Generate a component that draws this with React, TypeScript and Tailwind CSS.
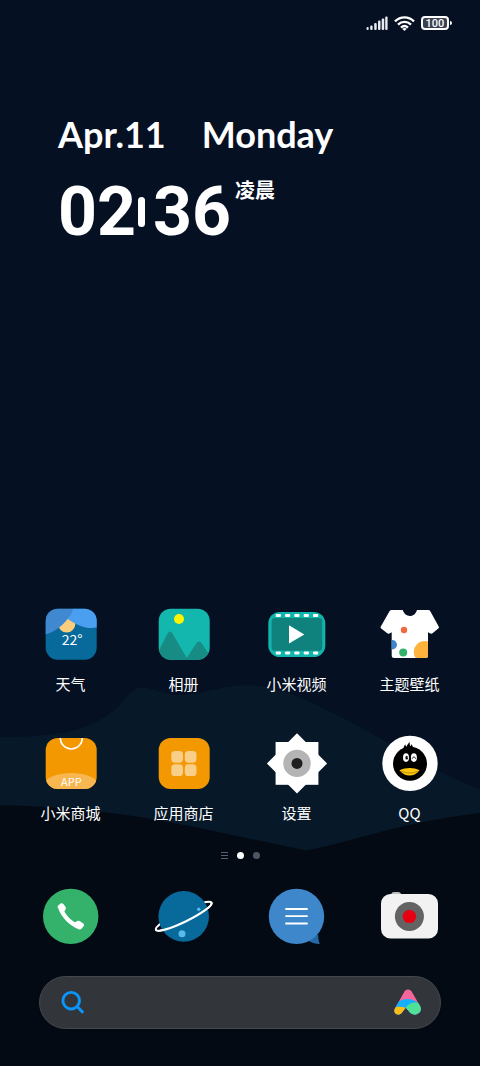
import React, { useState } from 'react'

interface AppItem {
  name: string
  icon: React.ReactNode
}

function Icon({ children }: { children: React.ReactNode }) {
  return (
    <svg viewBox="0 0 60 60" className="h-15 w-15 overflow-visible" aria-hidden="true">
      {children}
    </svg>
  )
}

const WeatherIcon = () => (
  <Icon>
    <defs>
      <clipPath id="weather-clip">
        <rect x="4.7" y="4.7" width="51" height="51" rx="12" />
      </clipPath>
    </defs>
    <g clipPath="url(#weather-clip)">
      <rect x="4" y="4" width="52" height="52" fill="#076a9b" />
      <circle cx="25.7" cy="20" r="8.6" fill="#fbcd7c" />
      <path d="M4 4H32C31.5 9 29.5 13 26.3 15.5C20 23 13 28 4 30.6Z" fill="#4088cf" />
      <path d="M31.8 4H56V23.6C50 24.6 44.5 24 39 21.7C34.5 20 30 17.6 26.3 14.6C29.5 12 31.4 8.5 31.8 4Z" fill="#4a9ff0" />
    </g>
    <text x="31" y="41" textAnchor="middle" fontSize="14" fill="#fff" className="font-['Noto_Sans_CJK_SC',sans-serif]">
      22°
    </text>
  </Icon>
)

const GalleryIcon = () => (
  <Icon>
    <defs>
      <clipPath id="gallery-clip">
        <rect x="4.7" y="4.7" width="51" height="51" rx="12" />
      </clipPath>
    </defs>
    <g clipPath="url(#gallery-clip)">
      <rect x="4" y="4" width="52" height="52" fill="#14b7ae" />
      <circle cx="25" cy="15" r="5" fill="#fdf500" />
      <path d="M4 48.3L13.6 29.2Q16 25.6 18.4 29.2L32.7 54L42.6 39Q45 36.2 47.4 39L56 51.5V56H4Z" fill="#178c85" />
    </g>
  </Icon>
)

const VideoIcon = () => (
  <Icon>
    <rect x="1.3" y="8" width="57" height="45" rx="11.5" fill="#12b5ad" />
    <rect x="4.6" y="14" width="50.6" height="32.7" rx="3" fill="#10827d" />
    {[8.7, 18, 27.3, 36.7, 46].map((x) => (
      <g key={x} fill="#fff">
        <rect x={x} y="10" width="5.2" height="3" rx="1" />
        <rect x={x} y="47.6" width="5.2" height="3" rx="1" />
      </g>
    ))}
    <path d="M22 21.3L37.3 30.4L22 39.6Z" fill="#fff" />
  </Icon>
)

const SHIRT =
  'M12 6H22.7C24 9.7 26.5 12 30 12C33.5 12 35.7 9.7 37 6H48C49.2 6 49.8 6.4 50.3 7.3L58.7 22.5C59.1 23.4 59 24 58.3 24.5L52.5 29.3C51.7 29.9 51.2 29.9 50.4 29.5L48 28.3V51.5Q48 54 45.5 54H14.2Q11.7 54 11.7 51.5V28.3L9.3 29.5C8.5 29.9 8 29.9 7.2 29.3L1.2 24.5C.5 24 .4 23.4 .8 22.5L9.5 7.3C10 6.4 10.8 6 12 6Z'

const ThemesIcon = () => (
  <Icon>
    <defs>
      <clipPath id="shirt-clip">
        <path d={SHIRT} />
      </clipPath>
    </defs>
    <path d={SHIRT} fill="#fff" />
    <g clipPath="url(#shirt-clip)">
      <circle cx="24" cy="26" r="3.2" fill="#f0683f" />
      <circle cx="12.3" cy="40.7" r="4.7" fill="#3f84cf" />
      <circle cx="23.2" cy="48.5" r="4" fill="#32b26c" />
      <circle cx="44.8" cy="48" r="11" fill="#fdb33c" />
    </g>
  </Icon>
)

const MiStoreIcon = () => (
  <Icon>
    <defs>
      <clipPath id="store-clip">
        <rect x="4.7" y="5" width="51" height="51" rx="12" />
      </clipPath>
    </defs>
    <g clipPath="url(#store-clip)">
      <rect x="4" y="4" width="52" height="52" fill="#f49802" />
      <ellipse cx="30.2" cy="52" rx="27" ry="12" fill="#f8b650" />
      <circle cx="30.3" cy="5" r="11" fill="none" stroke="#fff" strokeWidth="1.6" />
    </g>
    <text x="30.3" y="53" textAnchor="middle" fontSize="11" fill="#fff" className="font-['Noto_Sans_CJK_SC',sans-serif]">
      APP
    </text>
  </Icon>
)

const AppStoreIcon = () => (
  <Icon>
    <rect x="4.7" y="5" width="51" height="51" rx="12" fill="#f49802" />
    <g fill="#f8ce88">
      <rect x="17.3" y="18" width="11.7" height="11.7" rx="3.6" />
      <rect x="30.8" y="18" width="11.7" height="11.7" rx="3.6" />
      <rect x="17.3" y="31.3" width="11.7" height="11.7" rx="3.6" />
      <rect x="30.8" y="31.3" width="11.7" height="11.7" rx="3.6" />
    </g>
  </Icon>
)

const SettingsIcon = () => (
  <Icon>
    <rect x="8.6" y="9" width="42.8" height="42.8" fill="#fff" />
    <path d="M30 .3L60.1 30.4L30 60.5L-.1 30.4Z" fill="#fff" />
    <circle cx="30" cy="30.4" r="13.7" fill="#b4b4b4" />
    <circle cx="30" cy="30.4" r="5.5" fill="#1f1f1f" />
  </Icon>
)

const QQIcon = () => (
  <Icon>
    <circle cx="30" cy="30.4" r="27.7" fill="#fff" />
    <circle cx="30" cy="30.8" r="17" fill="#000" />
    <path d="M23 16.5C23.6 14.5 24.2 13 25.2 11.3C25.5 12.5 25.9 13.2 26.5 13.8C27.1 12 28.3 10.3 29.8 9C29.5 10.6 29.8 12 30.4 13.3C31 12.5 31.4 11.8 31.8 11C32.2 13 33.2 14.8 34.5 16.5Z" fill="#000" />
    <ellipse cx="26" cy="24.6" rx="3" ry="4.3" fill="#fff" />
    <ellipse cx="33.9" cy="24.6" rx="3" ry="4.3" fill="#fff" />
    <ellipse cx="26.7" cy="24.7" rx="1.3" ry="1.9" fill="#000" />
    <circle cx="27.1" cy="24.1" r=".5" fill="#fff" />
    <path d="M32.3 25.3C32.8 23.4 34.9 23.4 35.5 25.3" fill="none" stroke="#000" strokeWidth=".9" strokeLinecap="round" />
    <path d="M19.4 37.2C23 35.6 26 34.9 29.7 34.9C33.3 34.9 36.3 35.6 39.6 37.2C37 40.5 33.5 42.5 29.6 42.5C25.6 42.5 22.2 40.5 19.4 37.2Z" fill="#fbc60c" />
    <path d="M21.5 38.2C26.5 40.6 32.8 40.6 37.6 38.2" fill="none" stroke="#8a6500" strokeWidth=".6" />
  </Icon>
)

const PhoneIcon = () => (
  <Icon>
    <circle cx="29.7" cy="30.4" r="27.7" fill="#34b26c" />
    <path
      d="M17.2 22.2C16.2 21.2 16.3 20.3 17.2 19.4L19.3 17.8C20.3 17.1 21.5 17.2 22.3 18L24.3 20.6C25.1 21.8 25 22.8 24.3 23.9C23.5 24.8 23.3 25.2 23.7 26.1C25.7 29.8 29.3 33.8 33.4 36C34.2 36.4 34.7 36.2 35.4 35.4C36.2 34.5 37.4 34.4 38.5 35.1L42 37.3C43.2 38.2 43.4 39.2 42.6 40.3L40.7 42.6C39.9 43.5 38.9 43.7 37.7 43.3C28.6 39.6 20.5 31.6 17.2 22.2Z"
      fill="#fff"
    />
  </Icon>
)

const BrowserIcon = () => (
  <Icon>
    <g transform="rotate(-26 29.7 30.3)">
      <ellipse cx="29.7" cy="30.3" rx="31" ry="5.5" fill="none" stroke="#fff" strokeWidth="2" />
    </g>
    <circle cx="29.7" cy="30.4" r="25.3" fill="#086a9b" />
    <circle cx="28" cy="47.7" r="3.5" fill="#5abbea" />
    <circle cx="44.7" cy="23.3" r="1.7" fill="#5abbea" />
    <g transform="rotate(-26 29.7 30.3)">
      <path d="M-1.3 30.3A31 5.5 0 0 0 60.7 30.3" fill="none" stroke="#fff" strokeWidth="2.2" />
    </g>
  </Icon>
)

const MessagesIcon = () => (
  <Icon>
    <path d="M51.2 48.5C51.3 52 51.6 55 52.6 57.5C52.7 58 52.4 58.2 52 58.1C48.5 57.8 44 56.8 40 54Z" fill="#2468a6" />
    <circle cx="29.5" cy="30.4" r="27.7" fill="#3e87cb" />
    <path d="M19 23H40M19 30.1H40M19 37.5H40" stroke="#fff" strokeWidth="1.9" strokeLinecap="round" />
  </Icon>
)

const CameraIcon = () => (
  <Icon>
    <rect x="11.2" y="6" width="9.9" height="6" rx="3" fill="#bcbcbc" />
    <rect x="1" y="8" width="57" height="44.6" rx="9.5" fill="#f2f2f2" />
    <circle cx="29.4" cy="30.4" r="14.5" fill="#636363" />
    <circle cx="29.4" cy="30.4" r="6.7" fill="#e60012" />
  </Icon>
)

const apps: AppItem[] = [
  { name: '天气', icon: <WeatherIcon /> },
  { name: '相册', icon: <GalleryIcon /> },
  { name: '小米视频', icon: <VideoIcon /> },
  { name: '主题壁纸', icon: <ThemesIcon /> },
  { name: '小米商城', icon: <MiStoreIcon /> },
  { name: '应用商店', icon: <AppStoreIcon /> },
  { name: '设置', icon: <SettingsIcon /> },
  { name: 'QQ', icon: <QQIcon /> },
]

const dock: AppItem[] = [
  { name: '电话', icon: <PhoneIcon /> },
  { name: '浏览器', icon: <BrowserIcon /> },
  { name: '短信', icon: <MessagesIcon /> },
  { name: '相机', icon: <CameraIcon /> },
]

function Wallpaper() {
  return (
    <svg
      viewBox="0 0 480 1066"
      preserveAspectRatio="none"
      className="absolute inset-0 -z-10 h-full w-full"
      aria-hidden="true"
    >
      <rect width="480" height="1066" fill="#051023" />
      <path
        d="M0 737.3C25 737 50 735.5 73 730.7C90 727 108 717 120 705C128 696 134 687.3 142 687.3C152 687.3 162 695 180 695C203 695 220 685.3 247 685.3C280 685.3 305 700 333 713C372 732 410 757 440 772C455 779 468 785 480 789V1066H0Z"
        fill="#071929"
      />
      <path
        d="M0 805.3C45 805.5 90 810 133 816C180 823 250 839 306 850.3C345 844 400 822 480 813V1066H0Z"
        fill="#030a14"
      />
    </svg>
  )
}

function StatusBar() {
  return (
    <header className="flex h-12 items-center justify-end gap-1.5 px-7 pb-0.5">
      <svg viewBox="0 0 22 14" className="h-3.5 w-5.5" fill="#e8ebf0" aria-hidden="true">
        <rect x="0.5" y="11" width="2.2" height="3" rx="1" />
        <rect x="4.2" y="9.5" width="2.4" height="4.5" rx="1" />
        <rect x="8.2" y="7" width="2.5" height="7" rx="1" />
        <rect x="12" y="4.5" width="2.5" height="9.5" rx="1" />
        <rect x="15.7" y="2.5" width="2.5" height="11.5" rx="1" />
        <rect x="19.2" y="0.5" width="2.4" height="13.5" rx="1" />
      </svg>
      <svg viewBox="0 0 21 15" className="h-[15px] w-[21px]" fill="none" stroke="#fff" strokeWidth="2.4" aria-hidden="true">
        <path d="M1 5.3C6.5 0 14.5 0 20 5.3" />
        <path d="M4 8.6C7.7 5 13.3 5 17 8.6" />
        <path d="M7 11.6C9.1 9.7 11.9 9.7 14 11.6" />
        <path d="M10.5 15L8.2 12.8Q10.5 11 12.8 12.8Z" fill="#fff" stroke="none" />
      </svg>
      <div className="flex items-center gap-px">
        <div className="flex h-3.5 w-7 items-center justify-center rounded-[4px] border-2 border-white bg-[#3a4152] font-[Roboto,sans-serif] text-[11px] leading-none font-medium text-white">
          100
        </div>
        <div className="h-1 w-0.5 rounded-r bg-white" />
      </div>
    </header>
  )
}

function Clock() {
  return (
    <section className="px-[58px] pt-16 text-white">
      <p className="flex gap-9 font-[Lato,sans-serif] text-[36px] leading-11 font-bold">
        <span>Apr.11</span>
        <span>Monday</span>
      </p>
      <div className="flex items-start pt-[22px]">
        <time className="flex items-center font-[Roboto,sans-serif] text-[68px] leading-[68px] font-bold">
          <span>02</span>
          <span className="mr-2 ml-0.5 h-[30px] w-[7px] rounded-full bg-white" />
          <span>36</span>
        </time>
        <span className="ml-1 font-['Noto_Sans_CJK_SC',sans-serif] text-xl leading-6 font-bold">凌晨</span>
      </div>
    </section>
  )
}

export default function App() {
  const [page, setPage] = useState(1)

  return (
    <div className="relative isolate flex min-h-screen flex-col overflow-hidden pb-[37px] font-['Noto_Sans_CJK_SC',sans-serif]">
      <Wallpaper />
      <StatusBar />
      <Clock />

      <main className="mt-auto grid grid-cols-4 gap-y-[39px] px-3.5">
        {apps.map((app) => (
          <button key={app.name} type="button" className="flex flex-col items-center gap-2.5">
            {app.icon}
            <span className="text-[15px] leading-5 text-white">{app.name}</span>
          </button>
        ))}
      </main>

      {/* Page indicator */}
      <nav className="mt-[27px] flex h-2.5 items-center justify-center gap-[9px]">
        <button type="button" aria-label="Feed" className="flex w-[7px] flex-col gap-0.5" onClick={() => setPage(0)}>
          <span className="h-px w-full bg-[#5a606b]" />
          <span className="h-px w-full bg-[#5a606b]" />
          <span className="h-px w-full bg-[#5a606b]" />
        </button>
        {[1, 2].map((n) => (
          <button
            key={n}
            type="button"
            aria-label={`Page ${n}`}
            onClick={() => setPage(n)}
            className={page === n ? 'h-[7px] w-[7px] rounded-full bg-white' : 'h-[7px] w-[7px] rounded-full bg-[#4f5560]'}
          />
        ))}
      </nav>

      <footer className="mt-[26px] grid grid-cols-4 px-3.5">
        {dock.map((app) => (
          <button key={app.name} type="button" aria-label={app.name} className="flex justify-center">
            {app.icon}
          </button>
        ))}
      </footer>

      <form
        role="search"
        className="mx-[39px] mt-[30px] flex h-[53px] items-center rounded-full border border-[#44484e] bg-[#32363b] px-5"
        onSubmit={(e) => e.preventDefault()}
      >
        <label htmlFor="search" aria-label="Search">
          <svg viewBox="0 0 26 26" className="h-6.5 w-6.5" fill="none" stroke="#0b95f8" strokeWidth="2.9" strokeLinecap="round" aria-hidden="true">
            <circle cx="11.2" cy="10.7" r="8.3" />
            <path d="M17.3 16.8L22.4 21.9" />
          </svg>
        </label>
        <input id="search" type="text" className="h-full min-w-0 flex-1 bg-transparent px-3 text-base text-white outline-none" />
        <button type="button" aria-label="Assistant">
          <svg viewBox="0 0 27 26" className="h-6.5 w-[27px] overflow-visible" aria-hidden="true">
            <defs>
              <clipPath id="assistant-clip">
                <path d="M10.3 2.7C12 -.3 16 -.3 17.8 2.7L26 17C28.5 22 24.5 25.5 20.8 25.5C16 25.5 14.5 21 11.7 18.8L8 23.5C6 26 3 26 1.5 24.5C0 23 0 21 1.2 19Z" />
              </clipPath>
            </defs>
            <g clipPath="url(#assistant-clip)" transform="translate(1 -1)">
              <rect width="27" height="26" fill="#f6659c" />
              <path d="M0 26V18L4 13C10 8.5 19 8.5 27 16V26Z" fill="#15b0fb" />
              <path d="M0 26V19C3 17.3 7 17.2 11.7 18.8L8 26Z" fill="#fcbd12" />
              <path d="M11.7 18.8C15 13.5 21 12.3 27 14.5V26H15Z" fill="#4fe196" />
            </g>
          </svg>
        </button>
      </form>
    </div>
  )
}
